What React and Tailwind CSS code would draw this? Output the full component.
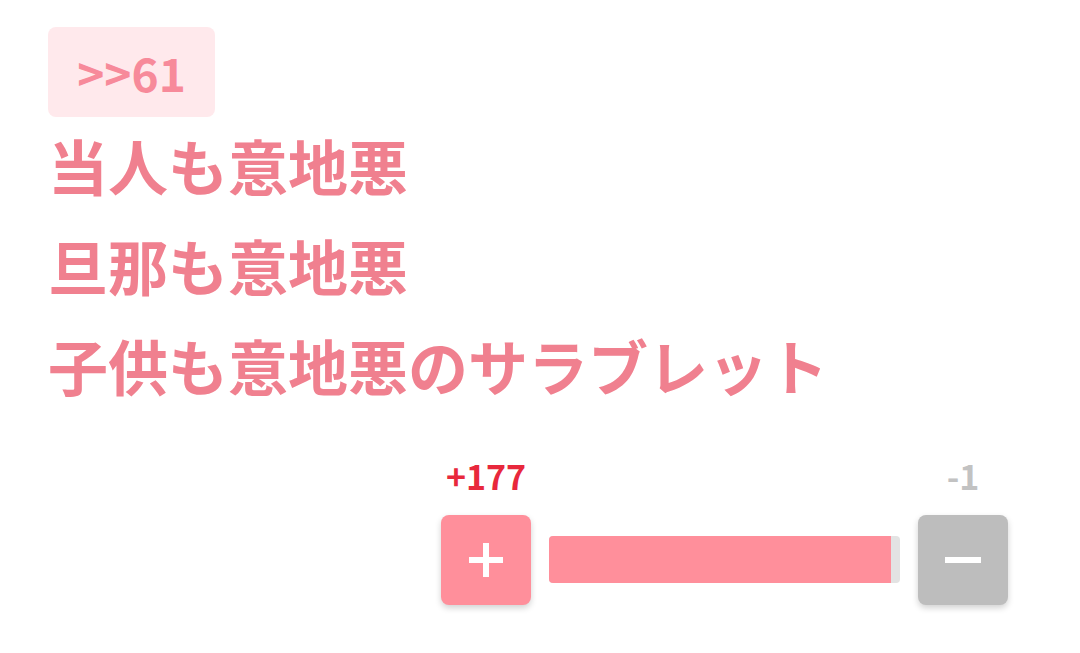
import { useState } from "react";

const lines = ["当人も意地悪", "旦那も意地悪", "子供も意地悪のサラブレット"];

function App() {
  const [up, setUp] = useState(177);
  const [down, setDown] = useState(1);

  return (
    <div
      className="min-h-screen bg-white px-12 pt-[27px]"
      style={{ fontFamily: '"Noto Sans CJK JP", "Noto Sans", sans-serif' }}
    >
      {/* アンカー番号 */}
      <div className="inline-flex h-[90px] w-[167px] items-center justify-center rounded-lg bg-[#ffe9ec] text-[46px] font-bold text-[#f78a9a]">
        &gt;&gt;61
      </div>

      {/* 本文 */}
      <div className="-mt-[2px] text-[60px] font-bold leading-[100px] text-[#f0808f]">
        {lines.map((line) => (
          <p key={line}>{line}</p>
        ))}
      </div>

      {/* 投票 */}
      <div className="mt-[36px] flex justify-end pr-6">
        <div className="flex items-end gap-[18px]">
          <div className="flex flex-col items-center">
            <span className="text-[34px] font-bold leading-[50px] text-[#e8283c]">+{up}</span>
            <button
              onClick={() => setUp(up + 1)}
              className="mt-[14px] flex h-[90px] w-[90px] items-center justify-center rounded-lg bg-[#ff8f9b] text-white shadow-[0_3px_6px_rgba(0,0,0,0.18)]"
            >
              <svg width="34" height="34" viewBox="0 0 34 34">
                <rect x="14" y="0" width="6" height="34" fill="white" />
                <rect x="0" y="14" width="34" height="6" fill="white" />
              </svg>
            </button>
          </div>

          <div className="mb-[22px] flex h-[47px] w-[351px] overflow-hidden rounded bg-[#e3e3e3]">
            <div className="h-full w-[97.4%] bg-[#ff8f9b]" />
          </div>

          <div className="flex flex-col items-center">
            <span className="text-[34px] font-bold leading-[50px] text-[#c2c2c2]">-{down}</span>
            <button
              onClick={() => setDown(down + 1)}
              className="mt-[14px] flex h-[90px] w-[90px] items-center justify-center rounded-lg bg-[#bdbdbd] text-white shadow-[0_3px_6px_rgba(0,0,0,0.18)]"
            >
              <svg width="36" height="6" viewBox="0 0 36 6">
                <rect x="0" y="0" width="36" height="6" fill="white" />
              </svg>
            </button>
          </div>
        </div>
      </div>
    </div>
  );
}

export default App;
